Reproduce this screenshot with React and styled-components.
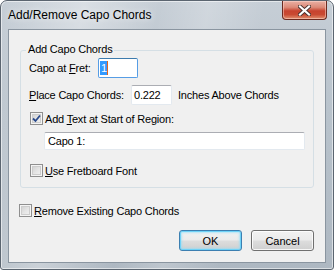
import React from "react";
import styled, { createGlobalStyle } from "styled-components";

const Global = createGlobalStyle`
  html, body { margin: 0; padding: 0; background: #ffffff; }
  * { box-sizing: border-box; }
`;

const Window = styled.div`
  width: 334px;
  height: 270px;
  display: flex;
  flex-direction: column;
  border: 1px solid #5b6570;
  border-radius: 7px 7px 3px 3px;
  background:
    linear-gradient(100deg, rgba(255,255,255,0) 0%, rgba(255,255,255,0.35) 22%, rgba(255,255,255,0) 42%, rgba(255,255,255,0.2) 55%, rgba(255,255,255,0) 70%),
    linear-gradient(180deg, #c6ced6 0%, #b9c3cc 40%, #aeb8c2 100%);
  box-shadow: inset 0 0 0 1px rgba(255,255,255,0.55);
  font-family: "Liberation Sans", Arial, sans-serif;
  overflow: hidden;
`;

const TitleBar = styled.div`
  height: 28px;
  display: flex;
  align-items: flex-start;
  flex: none;
`;

const Title = styled.div`
  padding: 7px 0 0 7px;
  font-size: 12px;
  line-height: 15px;
  color: #000;
  text-shadow: 0 0 6px rgba(255,255,255,0.9);
`;

const CloseButton = styled.div`
  margin-left: auto;
  margin-right: 6px;
  width: 45px;
  height: 19px;
  border: 1px solid #6b2a20;
  border-top: none;
  border-radius: 0 0 4px 4px;
  background: linear-gradient(180deg, #eab0a4 0%, #dc8a78 35%, #c7432f 55%, #c94a32 75%, #e09070 100%);
  box-shadow: inset 0 0 0 1px rgba(255,220,210,0.5);
  display: flex;
  align-items: center;
  justify-content: center;
`;

const Client = styled.div`
  flex: none;
  height: 234px;
  margin: 0 7px;
  border: 1px solid #8a95a0;
  background: #f0f0f0;
  padding: 12px 11px 12px 11px;
  display: flex;
  flex-direction: column;
  font-size: 11px;
  letter-spacing: -0.2px;
  color: #000;
`;

const Group = styled.fieldset`
  margin: 0;
  padding: 0 8px 10px 8px;
  border: 1px solid #d5dfe5;
  border-radius: 3px;
  min-width: 0;
  display: flex;
  flex-direction: column;
`;

const Legend = styled.legend`
  padding: 0 2px 2px 2px;
  margin-left: -3px;
  line-height: 14px;
  font-size: 11px;
`;

const Row = styled.div`
  display: flex;
  align-items: center;
  height: ${(p) => p.$h || 20}px;
  margin-top: ${(p) => p.$mt || 0}px;
  margin-left: ${(p) => p.$ml || 0}px;
`;

const Label = styled.span`
  width: ${(p) => p.$w}px;
  flex: none;
  white-space: nowrap;
`;

const Suffix = styled.span`
  margin-left: 6px;
  white-space: nowrap;
`;

const TextBox = styled.div`
  width: ${(p) => (p.$w ? `${p.$w}px` : "auto")};
  flex: ${(p) => (p.$w ? "none" : "1")};
  height: ${(p) => p.$h || 20}px;
  margin-left: ${(p) => p.$ml || 0}px;
  background: #fff;
  border: 1px solid ${(p) => (p.$focus ? "#569de5" : "#e3e9ef")};
  border-top-color: ${(p) => (p.$focus ? "#3d7bad" : "#abadb3")};
  border-radius: 2px;
  display: flex;
  align-items: center;
  padding-left: ${(p) => p.$pl || 2}px;
  font-size: 11px;
  white-space: nowrap;
`;

const Selected = styled.span`
  background: #3399ff;
  color: #fff;
  padding: 0 0 0 1px;
  line-height: 14px;
  border-right: 1px solid #e4641e;
`;

const CheckRow = styled.label`
  display: flex;
  align-items: center;
  gap: 2px;
  height: 13px;
  margin-top: ${(p) => p.$mt || 0}px;
  margin-left: ${(p) => p.$ml || 0}px;
  white-space: nowrap;
`;

const Box = styled.span`
  width: 13px;
  height: 13px;
  flex: none;
  border: 1px solid #8f8f8f;
  background: #f4f4f4;
  box-shadow: inset 0 0 0 1px #f4f4f4, inset 0 0 0 2px #cdcdcd;
  background-image: linear-gradient(135deg, #cbcbcb 0%, #e6e6e6 55%, #f4f4f4 100%);
  background-clip: content-box;
  padding: 1px;
  position: relative;
  display: flex;
  align-items: center;
  justify-content: center;
`;

const Buttons = styled.div`
  display: flex;
  justify-content: flex-end;
  gap: 9px;
  margin-top: 13px;
`;

const Button = styled.div`
  width: 63px;
  height: 21px;
  border: 1px solid ${(p) => (p.$default ? "#3c7fb1" : "#707070")};
  border-radius: 3px;
  background: linear-gradient(180deg, #f2f2f2 0%, #ebebeb 48%, #dddddd 52%, #cfcfcf 100%);
  box-shadow: ${(p) =>
    p.$default
      ? "inset 0 0 0 1px #6fd2f7, inset 0 0 2px 2px rgba(140,220,250,0.6)"
      : "inset 0 0 0 1px rgba(255,255,255,0.8)"};
  display: flex;
  align-items: center;
  justify-content: center;
  font-size: 11px;
  letter-spacing: 0;
`;

const Check = () => (
  <svg width="9" height="9" viewBox="0 0 9 9">
    <path d="M1 4.5 L3.5 7 L8 1.5" fill="none" stroke="#2a4a8c" strokeWidth="1.8" />
  </svg>
);

const CloseX = () => (
  <svg width="13" height="11" viewBox="0 0 13 11">
    <path d="M2 1.5 L11 9.5 M11 1.5 L2 9.5" stroke="#4a3430" strokeWidth="4" strokeLinecap="square" />
    <path d="M2 1.5 L11 9.5 M11 1.5 L2 9.5" stroke="#ffffff" strokeWidth="2.2" strokeLinecap="square" />
  </svg>
);

export default function App() {
  return (
    <>
      <Global />
      <Window>
        <TitleBar>
          <Title>Add/Remove Capo Chords</Title>
          <CloseButton>
            <CloseX />
          </CloseButton>
        </TitleBar>
        <Client>
          <Group>
            <Legend>Add Capo Chords</Legend>
            <Row>
              <Label $w={69}>
                Capo at <u>F</u>ret:
              </Label>
              <TextBox $w={40} $focus $pl={1}>
                <Selected>1</Selected>
              </TextBox>
            </Row>
            <Row $mt={7}>
              <Label $w={102}>
                <u>P</u>lace Capo Chords:
              </Label>
              <TextBox $w={41}>0.222</TextBox>
              <Suffix>Inches Above Chords</Suffix>
            </Row>
            <CheckRow $mt={7} $ml={1}>
              <Box>
                <Check />
              </Box>
              <span>
                Add <u>T</u>ext at Start of Region:
              </span>
            </CheckRow>
            <Row $mt={7} $h={18}>
              <TextBox $ml={15} $h={18} $pl={3}>
                Capo 1:
              </TextBox>
            </Row>
            <CheckRow $mt={14} $ml={1}>
              <Box />
              <span>
                <u>U</u>se Fretboard Font
              </span>
            </CheckRow>
          </Group>
          <CheckRow $mt={16} $ml={-1}>
            <Box />
            <span>
              <u>R</u>emove Existing Capo Chords
            </span>
          </CheckRow>
          <Buttons>
            <Button $default>OK</Button>
            <Button>Cancel</Button>
          </Buttons>
        </Client>
      </Window>
    </>
  );
}
